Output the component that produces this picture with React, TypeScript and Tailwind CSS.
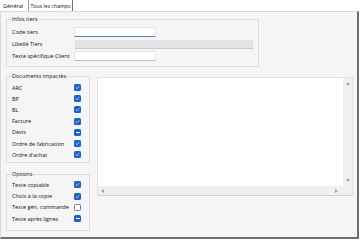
import React from 'react';

type CheckState = 'on' | 'off' | 'mixed';

const docs: { label: string; state: CheckState }[] = [
  { label: 'ARC', state: 'on' },
  { label: 'BP', state: 'on' },
  { label: 'BL', state: 'on' },
  { label: 'Facture', state: 'on' },
  { label: 'Devis', state: 'mixed' },
  { label: 'Ordre de fabrication', state: 'on' },
  { label: "Ordre d'achat", state: 'on' },
];

const options: { label: string; state: CheckState }[] = [
  { label: 'Texte copiable', state: 'on' },
  { label: 'Choix à la copie', state: 'on' },
  { label: 'Texte gén. commande', state: 'off' },
  { label: 'Texte après lignes', state: 'mixed' },
];

const Check = ({ state }: { state: CheckState }) => {
  if (state === 'off') {
    return <span className="block w-[7px] h-[7px] rounded-[1.5px] border border-[#7a7a7a] bg-white" />;
  }
  return (
    <span className="flex items-center justify-center w-[7px] h-[7px] rounded-[1.5px] bg-[#1b64c8]">
      {state === 'on' ? (
        <svg width="5" height="5" viewBox="0 0 10 10">
          <path d="M1.5 5.2 L4 7.5 L8.5 2.5" fill="none" stroke="#fff" strokeWidth="1.3" />
        </svg>
      ) : (
        <span className="block w-[4px] h-[1px] bg-white" />
      )}
    </span>
  );
};

const Row = ({ label, state }: { label: string; state: CheckState }) => (
  <div className="flex items-center h-[11.2px]">
    <span className="w-[62px] shrink-0 whitespace-nowrap">{label}</span>
    <Check state={state} />
  </div>
);

const Arrow = ({ dir }: { dir: 'up' | 'down' | 'left' | 'right' }) => {
  const d = {
    up: 'M0 3 L2 0 L4 3 Z',
    down: 'M0 0 L4 0 L2 3 Z',
    left: 'M3 0 L3 4 L0 2 Z',
    right: 'M0 0 L3 2 L0 4 Z',
  }[dir];
  const vertical = dir === 'up' || dir === 'down';
  return (
    <svg width={vertical ? 4 : 3} height={vertical ? 3 : 4} viewBox={vertical ? '0 0 4 3' : '0 0 3 4'}>
      <path d={d} fill="#a3a3a3" />
    </svg>
  );
};

export default function App() {
  return (
    <div
      className="w-[360px] h-[242px] bg-white text-[#111111] text-[5.5px] leading-[8px]"
      style={{ fontFamily: '"Open Sans", "Noto Sans", sans-serif' }}
    >
      {/* Onglets */}
      <div className="flex h-[11px] whitespace-nowrap">
        <div className="w-[29px] pl-[3px] flex items-center border-r border-[#a0a0a0] bg-white">Général</div>
        <div className="w-[44px] pl-[1.5px] flex items-center border-r border-[#707070] text-[5.2px]">Tous les champs</div>
      </div>

      {/* Panneau */}
      <div className="w-[359px] h-[228px] bg-[#f5f5f5] border-t border-l border-[#dadada] border-r-2 border-b-2 border-r-[#6e6e6e] border-b-[#6e6e6e] pl-[5px] pt-[3px]">
        <fieldset className="w-[252px] h-[52px] border border-[#dcdcdc] px-[5px]">
          <legend className="px-0">Infos tiers</legend>
          <div className="pt-[3px]">
            <div className="flex items-center h-[12px]">
              <span className="w-[62px]">Code tiers</span>
              <span className="block w-[82px] h-[10px] bg-white border border-[#e4e4e4] border-b-[1.5px] border-b-[#4a86d4]" />
            </div>
            <div className="flex items-center h-[12px]">
              <span className="w-[63px]">Libellé Tiers</span>
              <span className="block w-[178px] h-[9px] bg-[#e3e3e3] border-b border-[#c9c9c9]" />
            </div>
            <div className="flex items-center h-[12px]">
              <span className="w-[62px] whitespace-nowrap">Texte spécifique Client</span>
              <span className="block w-[82px] h-[10px] bg-white border border-[#e4e4e4] border-b-[#bdbdbd]" />
            </div>
          </div>
        </fieldset>

        <div className="flex mt-[5px]">
          <div className="w-[84px] flex flex-col gap-[7px]">
            <fieldset className="h-[91px] border border-[#dcdcdc] px-[5px]">
              <legend className="px-0">Documents impactés</legend>
              <div className="pt-[2px]">
                {docs.map((d) => (
                  <Row key={d.label} label={d.label} state={d.state} />
                ))}
              </div>
            </fieldset>
            <fieldset className="h-[61px] border border-[#dcdcdc] px-[5px]">
              <legend className="px-0">Options</legend>
              <div className="pt-[1.4px]">
                {options.map((o) => (
                  <Row key={o.label} label={o.label} state={o.state} />
                ))}
              </div>
            </fieldset>
          </div>

          {/* Zone de texte */}
          <div className="ml-[7px] mt-[5px] w-[256px] h-[119px] flex flex-col bg-white border border-[#e2e2e2] border-b-[#cfcfcf]">
            <div className="flex flex-1">
              <div className="flex-1" />
              <div className="w-[9px] bg-[#f0f0f0] flex flex-col items-center justify-between py-[4px]">
                <Arrow dir="up" />
                <Arrow dir="down" />
              </div>
            </div>
            <div className="h-[9px] bg-[#f0f0f0] flex items-center justify-between pl-[3px] pr-[14px]">
              <Arrow dir="left" />
              <Arrow dir="right" />
            </div>
          </div>
        </div>
      </div>
    </div>
  );
}
